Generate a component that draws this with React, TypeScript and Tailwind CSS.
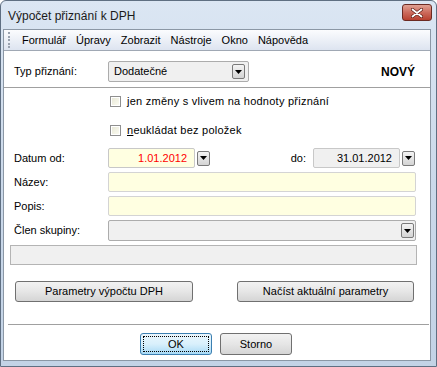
import React from "react"

const font = { fontFamily: '"Liberation Sans", Arial, sans-serif' }

const DropBtn = () => (
  <div className="w-[13px] h-[15px] rounded-[2px] border border-[#7a7a7a] bg-gradient-to-b from-[#f4f4f4] to-[#d4d4d4] flex items-center justify-center">
    <svg width="7" height="4" viewBox="0 0 7 4">
      <path d="M0 0h7L3.5 4z" fill="#000" />
    </svg>
  </div>
)

const CheckBox = () => (
  <div className="w-[11px] h-[11px] border border-[#8f8f8f] bg-white p-[1px] shrink-0">
    <div className="w-full h-full bg-gradient-to-br from-[#e8e8d8] to-[#fbfbf0]" />
  </div>
)

const Button = ({ children, w }: { children: React.ReactNode; w: string }) => (
  <div
    className={`${w} h-[21px] rounded-[3px] border border-[#707070] bg-gradient-to-b from-[#f2f2f2] via-[#e6e6e6] to-[#d5d5d5] flex items-center justify-center text-[11px] text-black`}
  >
    {children}
  </div>
)

export default function App() {
  const menu = ["Formulář", "Úpravy", "Zobrazit", "Nástroje", "Okno", "Nápověda"]
  return (
    <div
      className="w-[437px] h-[367px] rounded-t-[6px] border border-[#5f6f82] bg-gradient-to-b from-[#dbe6f3] via-[#cbd9ea] to-[#c3d3e6] flex flex-col overflow-hidden leading-none"
      style={font}
    >
      {/* title bar */}
      <div className="h-[28px] flex items-center pl-[7px] pr-[4px] shrink-0">
        <div className="flex-1 text-[12px] text-[#1a1a1a] pt-[1px]">Výpočet přiznání k DPH</div>
        <div className="w-[30px] h-[17px] mb-[5px] rounded-[3px] border border-[#6b2a22] bg-gradient-to-b from-[#e0a193] via-[#cc6a5c] to-[#b8402f] flex items-center justify-center">
          <svg width="12" height="10" viewBox="0 0 12 10">
            <path d="M1.5 1.5l9 7M10.5 1.5l-9 7" stroke="#5a1a12" strokeWidth="3.2" strokeLinecap="round" />
            <path d="M1.5 1.5l9 7M10.5 1.5l-9 7" stroke="#fff" strokeWidth="1.8" strokeLinecap="round" />
          </svg>
        </div>
      </div>

      {/* client */}
      <div className="flex-1 ml-[2px] mr-[5px] mb-[5px] border border-[#8b97a5] bg-white flex flex-col">
        {/* menu */}
        <div className="h-[21px] border-b border-[#a0a8b4] bg-gradient-to-b from-[#fbfcfe] to-[#dde4f0] flex items-center shrink-0">
          <div className="ml-[4px] w-[2px] h-[16px] flex flex-col justify-between">
            {[0, 1, 2, 3, 4].map((i) => (
              <div key={i} className="w-[2px] h-[2px] bg-[#9aa3b0]" />
            ))}
          </div>
          <div className="flex ml-[12px] gap-[10px] text-[11px] text-black">
            {menu.map((m) => (
              <span key={m}>{m}</span>
            ))}
          </div>
        </div>

        {/* body */}
        <div className="flex-1 flex flex-col text-[11px] text-black">
          <div className="mt-[10px] h-[21px] flex items-center shrink-0">
            <span className="ml-[10px] w-[94px]">Typ přiznání:</span>
            <div className="w-[141px] h-[21px] rounded-[2px] border border-[#acacac] bg-[#f0f0f0] flex items-center pl-[5px] pr-[3px]">
              <span className="flex-1">Dodatečné</span>
              <DropBtn />
            </div>
            <span className="ml-auto mr-[15px] font-bold text-[12px]">NOVÝ</span>
          </div>
          <div className="mt-[5px] h-px bg-[#a0a0a0] shrink-0" />

          <div className="mt-[8px] h-[11px] flex items-center ml-[106px] gap-[6px] shrink-0">
            <CheckBox />
            <span className="tracking-[0.25px]">
              <span className="underline">j</span>en změny s vlivem na hodnoty přiznání
            </span>
          </div>
          <div className="mt-[18px] h-[11px] flex items-center ml-[106px] gap-[6px] shrink-0">
            <CheckBox />
            <span className="tracking-[0.25px]">
              <span className="underline">n</span>eukládat bez položek
            </span>
          </div>

          <div className="mt-[12px] h-[20px] flex items-center shrink-0">
            <span className="ml-[10px] w-[94px]">Datum od:</span>
            <div className="w-[87px] h-[20px] rounded-[2px] border border-[#c8c8c8] bg-[#ffffe1] flex items-center justify-end pr-[7px] text-[#ff0000]">
              1.01.2012
            </div>
            <div className="ml-[2px]">
              <DropBtn />
            </div>
            <span className="ml-auto mr-[7px]">do:</span>
            <div className="w-[87px] h-[20px] rounded-[2px] border border-[#c8c8c8] bg-[#f0f0f0] flex items-center justify-end pr-[7px]">
              31.01.2012
            </div>
            <div className="ml-[2px] mr-[15px]">
              <DropBtn />
            </div>
          </div>

          <div className="mt-[4px] h-[20px] flex items-center shrink-0">
            <span className="ml-[10px] w-[94px]">Název:</span>
            <div className="flex-1 mr-[14px] h-[20px] rounded-[2px] border border-[#d4d4d4] bg-[#ffffe1]" />
          </div>
          <div className="mt-[4px] h-[20px] flex items-center shrink-0">
            <span className="ml-[10px] w-[94px]">Popis:</span>
            <div className="flex-1 mr-[14px] h-[20px] rounded-[2px] border border-[#d4d4d4] bg-[#ffffe1]" />
          </div>
          <div className="mt-[4px] h-[21px] flex items-center shrink-0">
            <span className="ml-[10px] w-[94px]">Člen skupiny:</span>
            <div className="flex-1 mr-[14px] h-[21px] rounded-[2px] border border-[#acacac] bg-[#f0f0f0] flex items-center justify-end pr-[1px]">
              <DropBtn />
            </div>
          </div>
          <div className="mt-[4px] ml-[6px] mr-[13px] h-[20px] border border-[#b4b4b4] bg-[#f0f0f0] shrink-0" />

          <div className="mt-[16px] flex shrink-0">
            <div className="ml-[11px]">
              <Button w="w-[178px]">Parametry výpočtu DPH</Button>
            </div>
            <div className="ml-[44px]">
              <Button w="w-[177px]">Načíst aktuální parametry</Button>
            </div>
          </div>

          <div className="mt-[22px] ml-[4px] mr-[1px] h-px bg-[#a0a0a0] shrink-0" />

          <div className="mt-[8px] flex justify-center gap-[8px] pr-[2px] shrink-0">
            <div className="w-[72px] h-[22px] rounded-[3px] border border-[#3c7fb1] bg-gradient-to-b from-[#eaf6fd] via-[#d9f0fc] to-[#a7d9f5] p-[2px]">
              <div className="w-full h-full border border-dotted border-black flex items-center justify-center">
                OK
              </div>
            </div>
            <div className="w-[72px] h-[22px] rounded-[3px] border border-[#707070] bg-gradient-to-b from-[#f2f2f2] via-[#e6e6e6] to-[#d5d5d5] flex items-center justify-center">
              Storno
            </div>
          </div>
        </div>
      </div>
    </div>
  )
}
